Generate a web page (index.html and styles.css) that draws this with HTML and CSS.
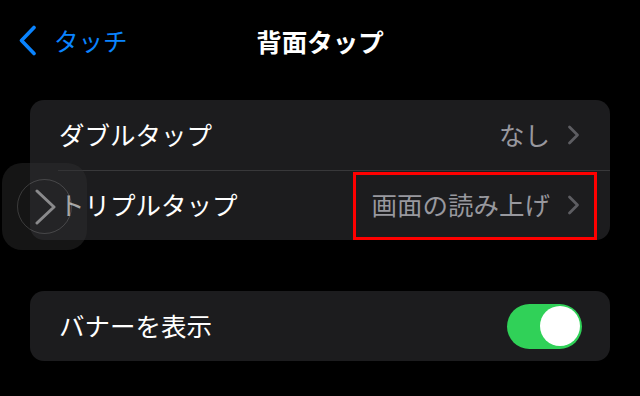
FILE: index.html
```html
<!DOCTYPE html>
<html lang="ja">
<head>
<meta charset="utf-8">
<link rel="stylesheet" href="styles.css">
</head>
<body>
<div class="screen">
  <header class="nav">
    <div class="back">
      <svg class="back-icon" width="22" height="31" viewBox="0 0 22 31"><path d="M17 2.5 L4.5 15.5 L17 28.5" fill="none" stroke="#0a84ff" stroke-width="3.6" stroke-linecap="round" stroke-linejoin="round"/></svg>
      <span class="back-label">タッチ</span>
    </div>
    <h1 class="title">背面タップ</h1>
  </header>

  <section class="group">
    <div class="row">
      <span class="label">ダブルタップ</span>
      <span class="value">なし<svg class="chev" width="13" height="20" viewBox="0 0 13 20"><path d="M2.5 2 L10.5 10 L2.5 18" fill="none" stroke="#5d5d62" stroke-width="2.8" stroke-linecap="round" stroke-linejoin="round"/></svg></span>
    </div>
    <div class="row row-sep">
      <span class="label">トリプルタップ</span>
      <span class="value">画面の読み上げ<svg class="chev" width="13" height="20" viewBox="0 0 13 20"><path d="M2.5 2 L10.5 10 L2.5 18" fill="none" stroke="#5d5d62" stroke-width="2.8" stroke-linecap="round" stroke-linejoin="round"/></svg></span>
      <div class="highlight"></div>
    </div>
  </section>

  <section class="group group-2">
    <div class="row">
      <span class="label">バナーを表示</span>
      <div class="toggle"><div class="knob"></div></div>
    </div>
  </section>

  <div class="assistive">
    <div class="assistive-ring">
      <svg width="24" height="36" viewBox="0 0 24 36"><path d="M3 2 L20 18 L3 34" fill="none" stroke="#8a8a8c" stroke-width="3" stroke-linecap="round" stroke-linejoin="round"/></svg>
    </div>
  </div>
</div>
</body>
</html>
```

FILE: styles.css
```css
html, body {
  margin: 0;
  padding: 0;
  background: #000;
}

.screen {
  position: relative;
  width: 640px;
  height: 396px;
  overflow: hidden;
  background: #000;
  font-family: "Noto Sans CJK JP", "Noto Sans", sans-serif;
  color: #fff;
  display: flex;
  flex-direction: column;
}

.nav {
  position: relative;
  height: 82px;
  display: flex;
  align-items: center;
}

.back {
  display: flex;
  align-items: center;
  margin-left: 17px;
  margin-top: -1px;
  color: #0a84ff;
}

.back-icon {
  display: block;
}

.back-label {
  margin-left: 15px;
  font-size: 24.5px;
  line-height: 1;
  padding-top: 1px;
}

.title {
  position: absolute;
  left: 0;
  right: 0;
  top: 0;
  height: 82px;
  margin: 0;
  display: flex;
  align-items: center;
  justify-content: center;
  font-size: 25.5px;
  font-weight: 700;
  line-height: 1;
  padding-bottom: 1px;
}

.group {
  margin: 18px 30px 0 30px;
  background: #1c1c1e;
  border-radius: 14px;
  display: flex;
  flex-direction: column;
}

.group-2 {
  margin-top: 51px;
}

.row {
  position: relative;
  height: 70px;
  display: flex;
  align-items: center;
  justify-content: space-between;
  padding: 0 30px 0 29px;
  font-size: 25.5px;
  line-height: 1;
}

.row-sep::before {
  content: "";
  position: absolute;
  left: 28px;
  right: 0;
  top: 0;
  height: 1px;
  background: #38383a;
}

.label {
  padding-bottom: 2px;
}

.value {
  display: flex;
  align-items: center;
  color: #98989e;
  padding-bottom: 2px;
}

.chev {
  margin-left: 17px;
  margin-top: 2px;
}

.highlight {
  position: absolute;
  left: 323px;
  right: 13px;
  top: 2px;
  bottom: 0;
  border: 3px solid #ff0000;
}

.toggle {
  width: 75px;
  height: 45px;
  border-radius: 23px;
  background: #30d158;
  display: flex;
  align-items: center;
  justify-content: flex-end;
  padding: 0 2.5px;
  box-sizing: border-box;
  margin-right: -2px;
}

.knob {
  width: 40px;
  height: 40px;
  border-radius: 50%;
  background: #fff;
}

.assistive {
  position: absolute;
  left: 2px;
  top: 163px;
  width: 85px;
  height: 87px;
  border-radius: 20px;
  background: rgba(49, 49, 49, 0.43);
  display: flex;
  align-items: center;
  justify-content: center;
}

.assistive-ring {
  width: 53px;
  height: 53px;
  border-radius: 50%;
  border: 1.5px solid rgba(255, 255, 255, 0.16);
  display: flex;
  align-items: center;
  justify-content: center;
}

.assistive-ring svg {
  margin-left: 2px;
}
```
